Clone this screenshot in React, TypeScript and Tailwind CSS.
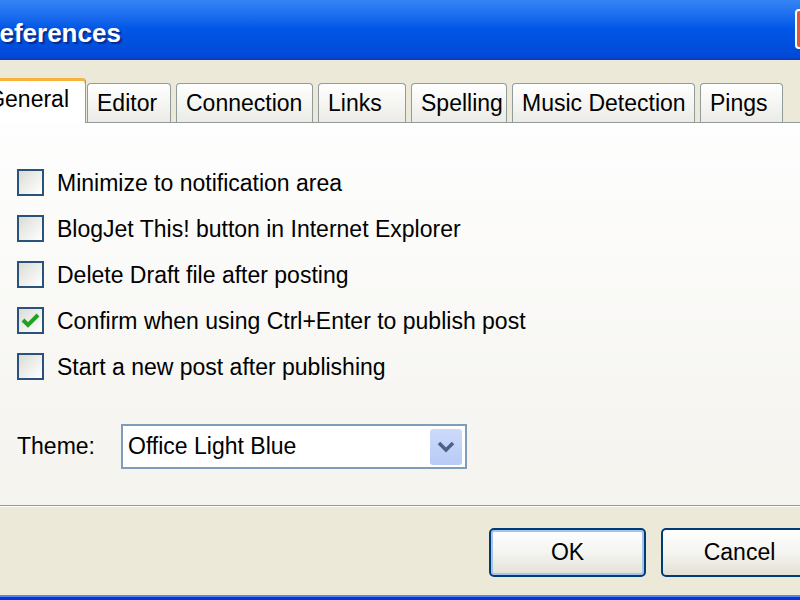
import React from "react";

const font = "font-['Liberation_Sans',Arial,sans-serif]";

const tabs = [
  { label: "Editor", w: "w-[84px]" },
  { label: "Connection", w: "w-[137px]" },
  { label: "Links", w: "w-[88px]" },
  { label: "Spelling", w: "w-[96px]" },
  { label: "Music Detection", w: "w-[183px]" },
  { label: "Pings", w: "w-[83px]" },
];

const options = [
  { label: "Minimize to notification area", checked: false },
  { label: "BlogJet This! button in Internet Explorer", checked: false },
  { label: "Delete Draft file after posting", checked: false },
  { label: "Confirm when using Ctrl+Enter to publish post", checked: true },
  { label: "Start a new post after publishing", checked: false },
];

export default function App() {
  return (
    <div
      className={`flex h-[600px] w-[800px] flex-col overflow-hidden bg-[#ece9d8] text-black ${font}`}
    >
      <TitleBar />

      {/* Tab strip */}
      <div className="flex h-[62px] items-end">
        <div className="relative z-10 -mb-px ml-[-14px] flex h-[45px] w-[100px] items-center justify-end rounded-t-[4px] border-x border-[#919b9c] bg-white pr-[16px] pb-[3px] text-[23px] shadow-[inset_0_3px_0_#f9b33a]">
          General
        </div>
        <div className="ml-px flex gap-[5px]">
          {tabs.map((t) => (
            <div
              key={t.label}
              className={`flex h-[39px] items-center rounded-t-[4px] border-x border-t border-[#919b9c] bg-linear-to-b from-white to-[#ecebe6] pl-[9px] text-[23px] ${t.w}`}
            >
              {t.label}
            </div>
          ))}
        </div>
      </div>

      {/* Panel */}
      <div className="flex h-[384px] flex-col border-y border-t-[#919b9c] border-b-[#9d9c95] bg-linear-to-b from-[#fefefe] to-[#f4f3ee] pt-[46px] pl-[17px] shadow-[0_1px_0_#fbfbf8]">
        <div className="flex flex-col gap-[19px]">
          {options.map((o) => (
            <CheckRow key={o.label} label={o.label} checked={o.checked} />
          ))}
        </div>

        <div className="mt-[44px] flex items-center">
          <span className="w-[104px] text-[23px]">Theme:</span>
          <div className="flex h-[45px] w-[346px] items-center justify-between border-2 border-[#7f9db9] bg-white pl-[5px] pr-[3px]">
            <span className="text-[23px]">Office Light Blue</span>
            <div className="flex h-[36px] w-[32px] items-center justify-center rounded-[3px] bg-linear-to-b from-[#cddafb] to-[#b7cbf6]">
              <svg width="18" height="12" viewBox="0 0 18 12">
                <path
                  d="M2 2 L9 9 L16 2"
                  fill="none"
                  stroke="#4d6185"
                  strokeWidth="3.5"
                />
              </svg>
            </div>
          </div>
        </div>
      </div>

      {/* Buttons */}
      <div className="mr-[-18px] flex flex-1 items-start justify-end gap-[15px] pt-[22px]">
        <XpButton label="OK" isDefault />
        <XpButton label="Cancel" />
      </div>

      <div className="h-[5px] border-t-2 border-[#5a86ee] bg-[#0831d9]" />
    </div>
  );
}

function TitleBar() {
  return (
    <div className="flex h-[60px] items-center border-b-2 border-[#0b3cc4] bg-linear-to-b from-[#3584f6] via-[#0056e6] to-[#0049d6]">
      <span className="ml-[-28px] pt-[8px] text-[26px] font-bold text-white [text-shadow:2px_2px_1px_#0a2a8c]">
        Preferences
      </span>
      <div className="flex-1" />
      <div className="mr-[-36px] h-[40px] w-[41px] rounded-[4px] border-2 border-white bg-[#e2553a]" />
    </div>
  );
}

function CheckRow({ label, checked }: { label: string; checked: boolean }) {
  return (
    <div className="flex h-[27px] items-center gap-[13px]">
      <span className="flex size-[27px] items-center justify-center border-2 border-[#29527c] bg-linear-to-br from-[#dcdcd6] to-white">
        {checked && (
          <svg width="19" height="17" viewBox="0 0 19 17">
            <path
              d="M2 8 L7 13 L17 3"
              fill="none"
              stroke="#21a121"
              strokeWidth="4"
            />
          </svg>
        )}
      </span>
      <span className="pt-[2px] text-[23px] leading-none">{label}</span>
    </div>
  );
}

function XpButton({ label, isDefault }: { label: string; isDefault?: boolean }) {
  return (
    <button
      type="button"
      className={`flex h-[49px] w-[157px] items-center justify-center rounded-[5px] border-2 border-[#003c74] bg-linear-to-b from-white via-[#f4f4f0] to-[#e3e0d6] text-[23px] ${
        isDefault ? "shadow-[inset_0_0_0_2px_#a4c3ef]" : ""
      }`}
    >
      {label}
    </button>
  );
}
